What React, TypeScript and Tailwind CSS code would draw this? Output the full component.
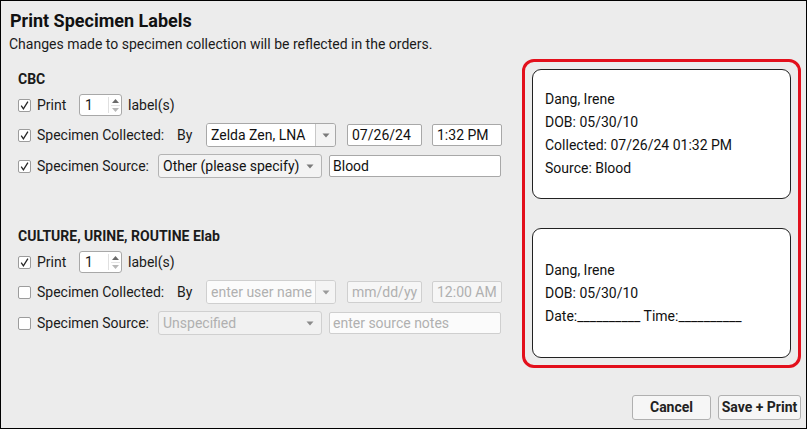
import React from "react";

function Check({ checked }: { checked: boolean }) {
  return (
    <span className="w-[13px] h-[13px] bg-white border border-[#9c9c9c] rounded-[2px] flex items-center justify-center shrink-0">
      {checked && (
        <svg width="11" height="11" viewBox="0 0 11 11">
          <path d="M2.2 5.6 L4.4 8.8 L8.9 1.6" fill="none" stroke="#262626" strokeWidth="1.3" />
        </svg>
      )}
    </span>
  );
}

function DownTri({ color = "#777" }: { color?: string }) {
  return (
    <svg width="8" height="5" viewBox="0 0 8 5">
      <path d="M0.5 0.5 L7.5 0.5 L4 4.5 Z" fill={color} />
    </svg>
  );
}

function Spinner() {
  return (
    <div className="w-[43px] h-[22px] bg-white border border-[#a8a8a8] rounded-[3px] flex shrink-0">
      <div className="flex-1 pl-[5px] flex items-center text-[14px] text-[#1a1a1a]">1</div>
      <div className="w-[13px] my-[2px] flex flex-col items-center justify-center gap-[2px] border-l border-[#e0e0e0]">
        <svg width="7" height="4" viewBox="0 0 7 4">
          <path d="M0 4 L7 4 L3.5 0 Z" fill="#6a6a6a" />
        </svg>
        <div className="w-[9px] h-px bg-[#e4e4e4]" />
        <svg width="7" height="4" viewBox="0 0 7 4">
          <path d="M0 0 L7 0 L3.5 4 Z" fill="#b8b8b8" />
        </svg>
      </div>
    </div>
  );
}

function Section({ title, enabled }: { title: string; enabled: boolean }) {
  return (
    <div className="flex flex-col">
      <div className="h-[18px] leading-[18px] font-bold text-[14px] text-[#1a1a1a]">{title}</div>
      <div className="mt-[6px] h-[22px] flex items-center">
        <Check checked />
        <span className="ml-[6px] w-[42px] text-[14px]">Print</span>
        <Spinner />
        <span className="ml-[6px] text-[14px]">label(s)</span>
      </div>
      <div className="mt-[7px] h-[24px] flex items-center">
        <Check checked={enabled} />
        <span className="ml-[6px] w-[140px] text-[14px]">Specimen Collected:</span>
        <span className="w-[29px] text-[14px]">By</span>
        <div
          className={
            "w-[130px] h-[24px] flex border rounded-[3px] overflow-hidden " +
            (enabled ? "border-[#a8a8a8]" : "border-[#cfcfcf]")
          }
        >
          <div
            className={
              "flex-1 flex items-center pl-[4px] text-[14px] " +
              (enabled ? "bg-white text-[#111]" : "bg-[#fbfbfb] text-[#b0b0b0]")
            }
          >
            {enabled ? "Zelda Zen, LNA" : "enter user name"}
          </div>
          <div
            className={
              "w-[20px] flex items-center justify-center border-l bg-[#f4f4f4] " +
              (enabled ? "border-[#c8c8c8]" : "border-[#dadada]")
            }
          >
            <DownTri color={enabled ? "#7a7a7a" : "#9a9a9a"} />
          </div>
        </div>
        <div
          className={
            "ml-[11px] w-[75px] h-[22px] flex items-center pl-[4px] border rounded-[2px] text-[14px] " +
            (enabled ? "bg-white border-[#a8a8a8] text-[#111]" : "bg-[#f6f6f6] border-[#cfcfcf] text-[#b0b0b0]")
          }
        >
          {enabled ? "07/26/24" : "mm/dd/yy"}
        </div>
        <div
          className={
            "ml-[10px] w-[70px] h-[22px] flex items-center pl-[4px] border rounded-[2px] text-[14px] " +
            (enabled ? "bg-white border-[#a8a8a8] text-[#111]" : "bg-[#f6f6f6] border-[#cfcfcf] text-[#b0b0b0]")
          }
        >
          {enabled ? "1:32 PM" : "12:00 AM"}
        </div>
      </div>
      <div className="mt-[7px] h-[24px] flex items-center">
        <Check checked={enabled} />
        <span className="ml-[6px] w-[121px] text-[14px]">Specimen Source:</span>
        <div
          className={
            "w-[164px] h-[24px] flex items-center justify-between pl-[4px] pr-[7px] border rounded-[3px] text-[14px] " +
            (enabled ? "bg-[#f3f3f3] border-[#b4b4b4] text-[#111]" : "bg-[#f1f1f1] border-[#d0d0d0] text-[#b0b0b0]")
          }
        >
          <span>{enabled ? "Other (please specify)" : "Unspecified"}</span>
          <DownTri color={enabled ? "#7a7a7a" : "#8a8a8a"} />
        </div>
        <div
          className={
            "ml-[7px] w-[172px] h-[22px] flex items-center pl-[3px] border rounded-[2px] text-[14px] " +
            (enabled ? "bg-white border-[#a8a8a8] text-[#111]" : "bg-[#fbfbfb] border-[#cfcfcf] text-[#b0b0b0]")
          }
        >
          {enabled ? "Blood" : "enter source notes"}
        </div>
      </div>
    </div>
  );
}

export default function App() {
  return (
    <div className="w-[807px] h-[429px] border border-black bg-[#ececec] flex flex-col font-['Roboto','Liberation_Sans',sans-serif] text-[#1a1a1a] overflow-hidden">
      <div className="pl-[9px] pt-[8px]">
        <div className="h-[24px] leading-[24px] text-[18px] font-bold text-[#111]">Print Specimen Labels</div>
        <div className="mt-[2px] h-[18px] leading-[18px] text-[14px] -ml-px">
          Changes made to specimen collection will be reflected in the orders.
        </div>
      </div>
      <div className="flex">
        <div className="pl-[17px] pt-[17px] flex flex-col">
          <Section title="CBC" enabled />
          <div className="mt-[49px]">
            <Section title="CULTURE, URINE, ROUTINE Elab" enabled={false} />
          </div>
        </div>
        <div className="ml-auto mr-[5px] mt-[6px] w-[279px] h-[309px] border-[3px] border-[#e3101c] rounded-[12px] p-[7px] flex flex-col gap-[29px]">
          <div className="h-[130px] bg-white border border-[#222] rounded-[9px] flex flex-col justify-center pl-[12px] text-[14px] leading-[23px] text-[#111]">
            <div>Dang, Irene</div>
            <div>DOB: 05/30/10</div>
            <div>Collected: 07/26/24 01:32 PM</div>
            <div>Source: Blood</div>
          </div>
          <div className="h-[130px] bg-white border border-[#222] rounded-[9px] flex flex-col justify-center pl-[12px] text-[14px] leading-[23px] text-[#111]">
            <div>Dang, Irene</div>
            <div>DOB: 05/30/10</div>
            <div>Date:__________ Time:__________</div>
          </div>
        </div>
      </div>
      <div className="mt-auto pb-[8px] pr-[5px] flex justify-end gap-[7px]">
        <button className="w-[79px] h-[25px] bg-[#f6f6f6] border border-[#b0b0b0] rounded-[3px] text-[14px] font-bold text-[#222]">
          Cancel
        </button>
        <button className="w-[83px] h-[25px] bg-[#f6f6f6] border border-[#b0b0b0] rounded-[3px] text-[14px] font-bold text-[#222] whitespace-nowrap">
          Save + Print
        </button>
      </div>
    </div>
  );
}
